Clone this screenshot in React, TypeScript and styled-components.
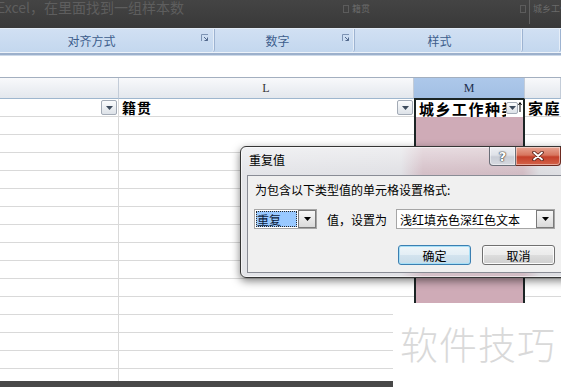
import React from "react";
import styled, { createGlobalStyle } from "styled-components";

const GlobalStyle = createGlobalStyle`
  html, body {
    margin: 0;
    padding: 0;
    background: #ffffff;
  }
  body {
    font-family: "Noto Sans CJK SC", "Noto Sans", "Liberation Sans", sans-serif;
  }
  * {
    box-sizing: border-box;
  }
`;

const GRID = "#d9d9d9";
const SEL_EDGE = "#1b2525";
const PINK = "#cfabb7";
const COLS = "119px 295px 111px 1fr";

const Screen = styled.div`
  position: relative;
  width: 561px;
  height: 387px;
  overflow: hidden;
  display: flex;
  flex-direction: column;
  background: #fff;
`;

/* dark strip on top: blurred text of whatever sits behind the ribbon */
const TopBar = styled.div`
  height: 28px;
  flex: none;
  display: grid;
  grid-template-columns: 343px 177px 1fr;
  background: linear-gradient(#444444, #393939);
  overflow: hidden;
`;

const TopCaption = styled.div`
  margin-left: -3px;
  font-size: 14px;
  line-height: 14px;
  color: #5e5e5e;
  white-space: nowrap;
`;

const GhostTag = styled.div`
  display: flex;
  align-items: flex-start;
  gap: 3px;
  padding-top: 4px;
  font-size: 9px;
  line-height: 10px;
  color: #6a6a6a;
  white-space: nowrap;
`;

const GhostBox = styled.span`
  width: 6px;
  height: 8px;
  margin-top: 1px;
  border: 1px solid #5c5c5c;
`;

const GhostText = styled.span<{ $rule?: boolean }>`
  padding-left: ${(p) => (p.$rule ? 3 : 0)}px;
  border-left: ${(p) => (p.$rule ? "1px solid #606060" : "none")};
  height: 24px;
  margin-top: -4px;
  padding-top: 4px;
`;

const Ribbon = styled.div`
  height: 24px;
  flex: none;
  display: flex;
  gap: 2px;
  background: linear-gradient(#d1e0f3, #c3d7ee);
  border-top: 1px solid #e3ecf7;
`;

const Group = styled.div<{ $w?: number }>`
  flex: ${(p) => (p.$w ? `0 0 ${p.$w}px` : "1")};
  display: flex;
  align-items: center;
  border-right: 1px solid #9db3d1;
  border-bottom-right-radius: 3px;
  box-shadow: inset -1px 0 0 #e6eef8;
`;

const GroupLabel = styled.div<{ $pr?: number }>`
  flex: 1;
  text-align: center;
  padding-right: ${(p) => p.$pr ?? 0}px;
  font-size: 12px;
  line-height: 16px;
  color: #3d5d8c;
`;

const Launcher = styled.svg<{ $mr: number }>`
  flex: none;
  width: 8px;
  height: 8px;
  margin: 0 ${(p) => p.$mr}px 5px 0;
`;

const RibbonEdge = styled.div`
  height: 4px;
  flex: none;
  background: linear-gradient(#edf3fa 0 1px, #9cb0cc 1px 3px, #cdd9e8 3px);
`;

const FormulaStrip = styled.div`
  height: 22px;
  flex: none;
  background: #fff;
  border-bottom: 1px solid #a3afbf;
`;

const HeadRow = styled.div`
  height: 21px;
  flex: none;
  display: grid;
  grid-template-columns: ${COLS};
`;

const HeadCell = styled.div<{ $sel?: boolean }>`
  display: flex;
  align-items: center;
  justify-content: center;
  border-right: 1px solid #c3ccd8;
  border-bottom: 1px solid ${(p) => (p.$sel ? SEL_EDGE : "#9eb6ce")};
  background: ${(p) =>
    p.$sel ? "linear-gradient(#adc8ea, #a2bfe4)" : "linear-gradient(#f8f9fb, #e3e7ed)"};
  font-family: "Liberation Serif", serif;
  font-size: 12px;
  color: ${(p) => (p.$sel ? "#1d2f4c" : "#333")};
`;

const Sheet = styled.div`
  height: 282px;
  flex: none;
  overflow: hidden;
`;

const Row = styled.div`
  display: grid;
  grid-template-columns: ${COLS};
  height: 18px;
`;

const Cell = styled.div<{ $rule?: boolean; $end?: boolean }>`
  display: flex;
  align-items: center;
  justify-content: ${(p) => (p.$end ? "flex-end" : "flex-start")};
  min-width: 0;
  overflow: hidden;
  border-bottom: 1px solid ${GRID};
  border-right: ${(p) => (p.$rule ? `1px solid ${GRID}` : "none")};
`;

const SelCell = styled.div<{ $active?: boolean }>`
  display: flex;
  align-items: center;
  min-width: 0;
  overflow: hidden;
  border-left: 2px solid ${SEL_EDGE};
  border-right: 2px solid ${SEL_EDGE};
  background: ${(p) => (p.$active ? "#fff" : PINK)};
  box-shadow: ${(p) => (p.$active ? `inset 0 1px 0 ${SEL_EDGE}` : "none")};
`;

const HeadText = styled.span<{ $size: number; $ls: number }>`
  flex: 1;
  min-width: 0;
  padding-left: 3px;
  white-space: nowrap;
  overflow: hidden;
  font-size: ${(p) => p.$size}px;
  font-weight: 700;
  letter-spacing: ${(p) => p.$ls}px;
  line-height: 17px;
  color: #000;
`;

const FilterBtn = styled.div<{ $small?: boolean }>`
  flex: none;
  width: ${(p) => (p.$small ? 12 : 16)}px;
  height: ${(p) => (p.$small ? 12 : 15)}px;
  margin-right: ${(p) => (p.$small ? 0 : 1)}px;
  display: flex;
  align-items: center;
  justify-content: center;
  border: 1px solid #a3abb6;
  border-radius: 2px;
  background: linear-gradient(#fbfcfd, #dde2e8);
`;

const SortArrow = styled.svg`
  flex: none;
  width: 4px;
  height: 10px;
  margin: 0 1px 2px 0;
`;

const BottomBar = styled.div`
  height: 6px;
  flex: none;
  background: #484848;
`;

const Dialog = styled.div`
  position: absolute;
  left: 240px;
  top: 146px;
  width: 335px;
  display: flex;
  flex-direction: column;
  border: 1px solid #353535;
  border-radius: 6px;
  background: linear-gradient(180deg, rgba(255, 255, 255, 0.45), rgba(255, 255, 255, 0) 26px),
    linear-gradient(
      90deg,
      #e4e5e9 0,
      #e1e1e5 160px,
      #d5c0c8 182px,
      #d2bcc4 282px,
      #dcdce0 298px,
      #e0e1e5 100%
    );
  box-shadow: 0 3px 9px rgba(0, 0, 0, 0.5), inset 0 0 0 1px rgba(255, 255, 255, 0.55);
`;

const TitleBar = styled.div`
  height: 28px;
  display: flex;
  align-items: flex-start;
  padding: 0 13px 0 8px;
`;

const TitleText = styled.div`
  flex: 1;
  padding-top: 5px;
  font-size: 12px;
  line-height: 16px;
  color: #000;
`;

const CaptionBtn = styled.div<{ $close?: boolean }>`
  width: ${(p) => (p.$close ? 45 : 27)}px;
  height: 19px;
  display: flex;
  align-items: center;
  justify-content: center;
  border: 1px solid ${(p) => (p.$close ? "#6d2a20" : "#6a6e78")};
  border-top: none;
  border-left: ${(p) => (p.$close ? "none" : undefined)};
  border-radius: ${(p) => (p.$close ? "0 0 4px 0" : "0 0 0 4px")};
  background: ${(p) =>
    p.$close
      ? "linear-gradient(#e8a593 0%, #d7765f 45%, #c4402a 55%, #d4634a 100%)"
      : "linear-gradient(#eef0f4 0%, #dfe2e8 45%, #c9cdd6 55%, #d6d9e0 100%)"};
  box-shadow: inset 0 0 0 1px rgba(255, 255, 255, 0.45);
`;

const HelpMark = styled.span`
  font-family: "DejaVu Sans", sans-serif;
  font-size: 13px;
  font-weight: 700;
  line-height: 13px;
  color: #fff;
  text-shadow: 0 0 1px #333, 0 0 1px #333, 0 0 2px #555;
`;

const Panel = styled.div`
  margin: 0 6px 4px 6px;
  border: 1px solid #898c95;
  background: #f0f0f0;
  padding: 6px 12px 7px 6px;
`;

const Prompt = styled.div`
  padding-left: 1px;
  font-size: 12px;
  line-height: 16px;
  color: #000;
  white-space: nowrap;
`;

const ComboRow = styled.div`
  margin-top: 11px;
  height: 20px;
  display: flex;
  align-items: center;
`;

const Combo = styled.div<{ $w: number }>`
  width: ${(p) => p.$w}px;
  height: 20px;
  flex: none;
  display: flex;
  align-items: stretch;
  border: 1px solid #a6a6a6;
  background: #fff;
`;

const ComboValue = styled.div<{ $picked?: boolean }>`
  flex: 1;
  display: flex;
  align-items: center;
  margin: ${(p) => (p.$picked ? "1px" : "0")};
  padding-left: ${(p) => (p.$picked ? 1 : 3)}px;
  background: ${(p) => (p.$picked ? "#99c9ff" : "transparent")};
  outline: ${(p) => (p.$picked ? "1px dotted #2a2a2a" : "none")};
  outline-offset: -1px;
  font-size: 12px;
  color: ${(p) => (p.$picked ? "#0a1a3a" : "#000")};
  white-space: nowrap;
`;

const DropBtn = styled.div`
  flex: none;
  width: 18px;
  display: flex;
  align-items: center;
  justify-content: center;
  border: 1px solid #7a7a7a;
  background: linear-gradient(#f7f7f7, #dadada);
`;

const InlineLabel = styled.span`
  margin: 0 9px 0 10px;
  font-size: 12px;
  color: #000;
  white-space: nowrap;
`;

const ButtonRow = styled.div`
  margin-top: 16px;
  display: flex;
  justify-content: flex-end;
  gap: 11px;
`;

const PushBtn = styled.div<{ $default?: boolean }>`
  width: 73px;
  height: 20px;
  display: flex;
  align-items: center;
  justify-content: center;
  border-radius: 3px;
  font-size: 12px;
  color: #000;
  border: 1px solid ${(p) => (p.$default ? "#3c7fb1" : "#707070")};
  background: ${(p) =>
    p.$default
      ? "linear-gradient(#eef5f9 0%, #e3eef5 50%, #d3e3ee 51%, #c8dce9 100%)"
      : "linear-gradient(#f2f2f2 0%, #ebebeb 50%, #dddddd 51%, #cfcfcf 100%)"};
  box-shadow: ${(p) => (p.$default ? "inset 0 0 0 1px #a6dff7" : "inset 0 0 0 1px #fcfcfc")};
`;

const Watermark = styled.div`
  position: absolute;
  left: 393px;
  top: 303px;
  right: 0;
  bottom: 0;
  background: #fff;
  padding: 18px 0 0 7px;
  font-size: 38px;
  line-height: 44px;
  letter-spacing: 1px;
  font-weight: 300;
  color: #d9d9d9;
  white-space: nowrap;
`;

const Triangle: React.FC<{ color?: string }> = ({ color = "#333" }) => (
  <svg width="7" height="4" viewBox="0 0 7 4">
    <polygon points="0,0 7,0 3.5,4" fill={color} />
  </svg>
);

const LauncherIcon: React.FC<{ mr: number }> = ({ mr }) => (
  <Launcher $mr={mr} viewBox="0 0 8 8">
    <path d="M0.5 7V0.5H7" fill="none" stroke="#7d93b3" strokeWidth="1" />
    <path d="M3 3L6.5 6.5M6.5 3.5V6.5H3.5" fill="none" stroke="#52698d" strokeWidth="1" />
  </Launcher>
);

const ROWS = 16;

export default function App() {
  return (
    <>
      <GlobalStyle />
      <Screen>
        <TopBar>
          <TopCaption>Excel，在里面找到一组样本数</TopCaption>
          <GhostTag>
            <GhostBox />
            <GhostText>籍贯</GhostText>
          </GhostTag>
          <GhostTag>
            <GhostBox />
            <GhostText $rule>城乡工作种类</GhostText>
          </GhostTag>
        </TopBar>

        <Ribbon>
          <Group $w={215}>
            <GroupLabel $pr={18}>对齐方式</GroupLabel>
            <LauncherIcon mr={5} />
          </Group>
          <Group $w={138}>
            <GroupLabel $pr={4}>数字</GroupLabel>
            <LauncherIcon mr={4} />
          </Group>
          <Group $w={166}>
            <GroupLabel>样式</GroupLabel>
          </Group>
          <Group />
        </Ribbon>
        <RibbonEdge />
        <FormulaStrip />

        <HeadRow>
          <HeadCell />
          <HeadCell>L</HeadCell>
          <HeadCell $sel>M</HeadCell>
          <HeadCell />
        </HeadRow>

        <Sheet>
          {Array.from({ length: ROWS }, (_, i) =>
            i === 0 ? (
              <Row key={i}>
                <Cell $rule $end>
                  <FilterBtn>
                    <Triangle color="#3d4b5c" />
                  </FilterBtn>
                </Cell>
                <Cell>
                  <HeadText $size={14} $ls={1}>
                    籍贯
                  </HeadText>
                  <FilterBtn>
                    <Triangle color="#3d4b5c" />
                  </FilterBtn>
                </Cell>
                <SelCell $active>
                  <HeadText $size={15} $ls={1.5}>
                    城乡工作种类
                  </HeadText>
                  <FilterBtn $small>
                    <Triangle color="#3d4b5c" />
                  </FilterBtn>
                  <SortArrow viewBox="0 0 4 10">
                    <path d="M2 10V1M0.5 3L2 0.5L3.5 3" fill="none" stroke="#000" strokeWidth="1" />
                  </SortArrow>
                </SelCell>
                <Cell>
                  <HeadText $size={15} $ls={1.5}>
                    家庭
                  </HeadText>
                </Cell>
              </Row>
            ) : (
              <Row key={i}>
                <Cell $rule />
                <Cell />
                <SelCell />
                <Cell />
              </Row>
            )
          )}
        </Sheet>
        <BottomBar />

        <Dialog>
          <TitleBar>
            <TitleText>重复值</TitleText>
            <CaptionBtn>
              <HelpMark>?</HelpMark>
            </CaptionBtn>
            <CaptionBtn $close>
              <svg width="12" height="10" viewBox="0 0 12 10">
                <path d="M2 1.5L10 8.5M10 1.5L2 8.5" stroke="#5a2118" strokeWidth="3.6" strokeLinecap="round" />
                <path d="M2 1.5L10 8.5M10 1.5L2 8.5" stroke="#ffffff" strokeWidth="1.8" strokeLinecap="round" />
              </svg>
            </CaptionBtn>
          </TitleBar>
          <Panel>
            <Prompt>为包含以下类型值的单元格设置格式:</Prompt>
            <ComboRow>
              <Combo $w={63}>
                <ComboValue $picked>重复</ComboValue>
                <DropBtn>
                  <Triangle color="#000" />
                </DropBtn>
              </Combo>
              <InlineLabel>值，设置为</InlineLabel>
              <Combo $w={159}>
                <ComboValue>浅红填充色深红色文本</ComboValue>
                <DropBtn>
                  <Triangle color="#000" />
                </DropBtn>
              </Combo>
            </ComboRow>
            <ButtonRow>
              <PushBtn $default>确定</PushBtn>
              <PushBtn>取消</PushBtn>
            </ButtonRow>
          </Panel>
        </Dialog>

        <Watermark>软件技巧</Watermark>
      </Screen>
    </>
  );
}
